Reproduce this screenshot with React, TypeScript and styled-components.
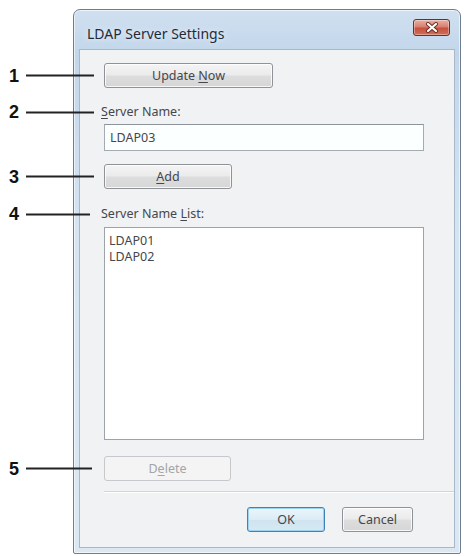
import React from "react";
import styled, { createGlobalStyle, css } from "styled-components";

const Global = createGlobalStyle`
  html, body { margin: 0; padding: 0; background: #ffffff; }
  body { width: 465px; height: 556px; overflow: hidden; }
`;

const Page = styled.div`
  padding: 9px 0 0 73px;
  font-family: "Noto Sans", "Open Sans", sans-serif;
`;

const Window = styled.div`
  width: 388px;
  height: 545px;
  box-sizing: border-box;
  border: 1px solid #6f7e8e;
  border-radius: 7px 7px 2px 2px;
  background: linear-gradient(180deg, #d0e0f0 0%, #c2d6eb 8%, #d4e4f3 40%, #dbe8f4 100%);
  display: flex;
  flex-direction: column;
  box-shadow: inset 0 0 0 1px rgba(255,255,255,0.6);
`;

const TitleBar = styled.div`
  height: 39px;
  display: flex;
  align-items: center;
  justify-content: space-between;
  padding: 0 10px 0 13px;
  flex: none;
`;

const Title = styled.div`
  font-family: "Noto Sans", "Open Sans", sans-serif;
  font-size: 14px;
  color: #1f2b3a;
  margin-top: 8px;
  text-shadow: 0 0 6px rgba(255,255,255,0.9);
`;

const CloseButton = styled.div`
  width: 37px;
  height: 17px;
  margin-top: -4px;
  box-sizing: border-box;
  border: 1px solid #6e2f27;
  border-radius: 3px;
  background: linear-gradient(180deg, #eab0a3 0%, #d9806f 45%, #c4513f 55%, #d36e58 100%);
  display: flex;
  align-items: center;
  justify-content: center;
  box-shadow: inset 0 0 0 1px rgba(255,255,255,0.35);
`;

const Client = styled.div`
  flex: 1;
  margin: 0 5px 5px 5px;
  background: #f1f2f4;
  border: 1px solid #a8b8c9;
  padding: 13px 0 0 24px;
  display: flex;
  flex-direction: column;
`;

const Row = styled.div<{ $mt?: number }>`
  position: relative;
  display: flex;
  align-items: center;
  margin-top: ${(p) => p.$mt ?? 0}px;
`;

const Callout = styled.div<{ $line: number }>`
  position: absolute;
  left: -95px;
  top: 50%;
  transform: translateY(-50%);
  display: flex;
  align-items: center;
  font-family: "Liberation Sans", Arial, sans-serif;
  font-weight: bold;
  font-size: 18px;
  color: #111;
  &::after {
    content: "";
    display: block;
    width: ${(p) => p.$line}px;
    height: 2px;
    margin-left: 7px;
    background: #222;
  }
`;

const ButtonBase = css`
  box-sizing: border-box;
  height: 25px;
  border-radius: 3px;
  font-family: "Noto Sans", "Open Sans", sans-serif;
  font-size: 12.5px;
  display: flex;
  align-items: center;
  justify-content: center;
`;

const Button = styled.div<{ $w: number; $disabled?: boolean; $focus?: boolean }>`
  ${ButtonBase};
  width: ${(p) => p.$w}px;
  color: ${(p) => (p.$disabled ? "#a3a5a8" : "#44474c")};
  border: 1px solid ${(p) => (p.$disabled ? "#c6c8cb" : p.$focus ? "#3d83b5" : "#8f9296")};
  background: ${(p) =>
    p.$disabled
      ? "#f4f4f4"
      : p.$focus
      ? "linear-gradient(180deg, #eaf6fc 0%, #dcecf5 50%, #cfe4f0 52%, #d6e9f4 100%)"
      : "linear-gradient(180deg, #f4f4f4 0%, #ebebeb 48%, #dddddd 52%, #d6d6d6 100%)"};
  box-shadow: ${(p) =>
    p.$focus ? "inset 0 0 0 1px #9dd2ee" : p.$disabled ? "none" : "inset 0 0 0 1px rgba(255,255,255,0.8)"};
`;

const Label = styled.div`
  font-size: 12.5px;
  color: #44474c;
  margin-left: -3px;
  line-height: 16px;
`;

const U = styled.span`
  text-decoration: underline;
  text-underline-offset: 2px;
`;

const TextBox = styled.div`
  box-sizing: border-box;
  width: 320px;
  height: 27px;
  border: 1px solid #a6abb2;
  border-top-color: #8c939b;
  background: #fbffff;
  font-size: 12.5px;
  color: #44474c;
  padding-left: 5px;
  display: flex;
  align-items: center;
`;

const ListBox = styled.div`
  box-sizing: border-box;
  width: 320px;
  height: 213px;
  border: 1px solid #9ea3a9;
  background: #ffffff;
  padding: 5px 0 0 4px;
  font-size: 12.5px;
  color: #44474c;
  line-height: 15.5px;
`;

const Separator = styled.div`
  height: 1px;
  margin-top: 10px;
  background: #d2d4d8;
  border-bottom: 1px solid #ffffff;
`;

const Footer = styled.div`
  display: flex;
  justify-content: flex-end;
  gap: 17px;
  padding-right: 41px;
  margin-top: 14px;
`;

export default function App() {
  return (
    <>
      <Global />
      <Page>
        <Window>
          <TitleBar>
            <Title>LDAP Server Settings</Title>
            <CloseButton>
              <svg width="14" height="11" viewBox="0 0 14 11">
                <path d="M3 2 L11 9 M11 2 L3 9" stroke="#6b2a22" strokeWidth="4" strokeLinecap="round" />
                <path d="M3 2 L11 9 M11 2 L3 9" stroke="#ffffff" strokeWidth="2.2" strokeLinecap="round" />
              </svg>
            </CloseButton>
          </TitleBar>
          <Client>
            <Row>
              <Callout $line={68}>1</Callout>
              <Button $w={169}>
                Update&nbsp;<U>N</U>ow
              </Button>
            </Row>
            <Row $mt={16}>
              <Callout $line={68}>2</Callout>
              <Label>
                <U>S</U>erver Name:
              </Label>
            </Row>
            <Row $mt={4}>
              <TextBox>LDAP03</TextBox>
            </Row>
            <Row $mt={13}>
              <Callout $line={68}>3</Callout>
              <Button $w={128}>
                <U>A</U>dd
              </Button>
            </Row>
            <Row $mt={17}>
              <Callout $line={64}>4</Callout>
              <Label>
                Server Name <U>L</U>ist:
              </Label>
            </Row>
            <Row $mt={5}>
              <ListBox>
                <div>LDAP01</div>
                <div>LDAP02</div>
              </ListBox>
            </Row>
            <Row $mt={16}>
              <Callout $line={66}>5</Callout>
              <Button $w={127} $disabled>
                D<U>e</U>lete
              </Button>
            </Row>
            <Separator />
            <Footer>
              <Button $w={78} $focus>
                OK
              </Button>
              <Button $w={71}>Cancel</Button>
            </Footer>
          </Client>
        </Window>
      </Page>
    </>
  );
}
